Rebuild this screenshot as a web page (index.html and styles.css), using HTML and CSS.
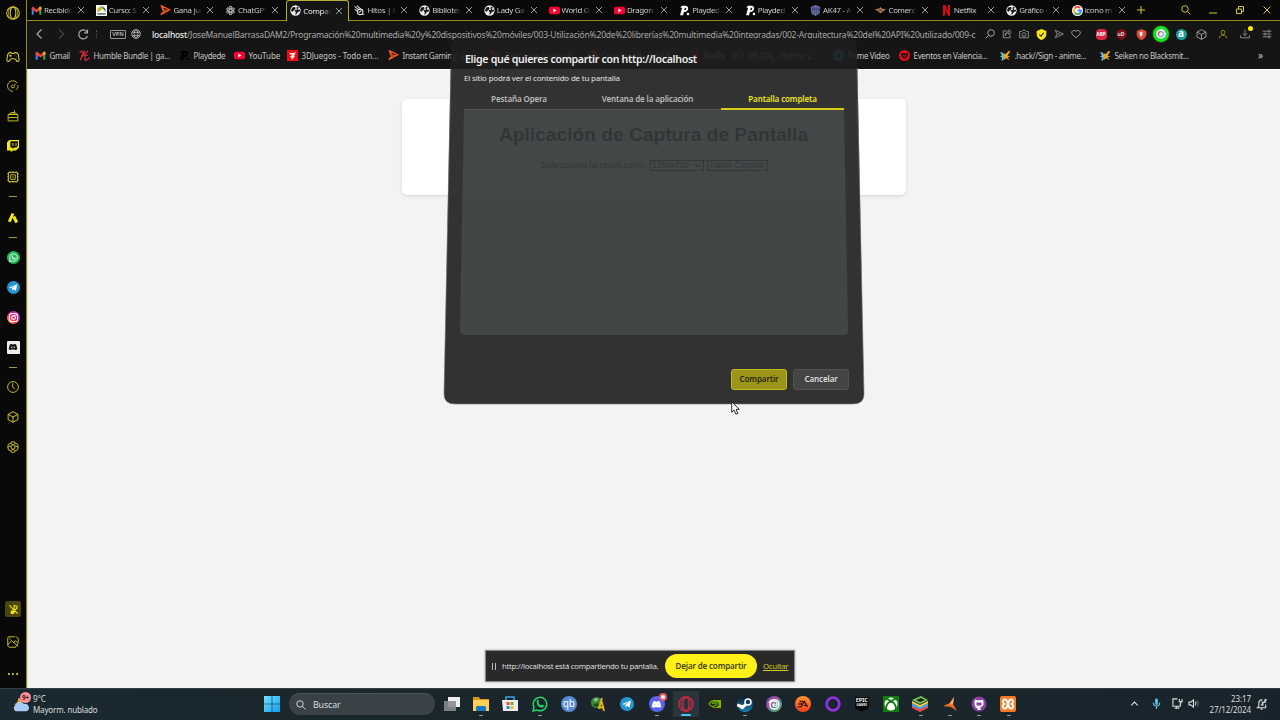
FILE: index.html
```html
<!DOCTYPE html>
<html lang="es">
<head>
<meta charset="utf-8">
<title>Compartir pantalla</title>
<link rel="stylesheet" href="styles.css">
</head>
<body>
<svg class="defs" aria-hidden="true">
  <defs>
    <linearGradient id="insta" x1="0" y1="1" x2="1" y2="0"><stop offset="0" stop-color="#ffca3a"/><stop offset=".4" stop-color="#ff3058"/><stop offset="1" stop-color="#8b25e8"/></linearGradient>
    <linearGradient id="win" x1="0" y1="0" x2="1" y2="1"><stop offset="0" stop-color="#6ce5ff"/><stop offset="1" stop-color="#149bee"/></linearGradient>
    <linearGradient id="steamg" x1="0" y1="0" x2="0" y2="1"><stop offset="0" stop-color="#10182f"/><stop offset="1" stop-color="#1783b5"/></linearGradient>
    <linearGradient id="ubig" x1="0" y1="0" x2="1" y2="1"><stop offset="0" stop-color="#3f49cc"/><stop offset=".35" stop-color="#b34b97"/><stop offset=".65" stop-color="#39958e"/><stop offset="1" stop-color="#c4a947"/></linearGradient>
    <linearGradient id="eag" x1="0" y1="0" x2="0" y2="1"><stop offset="0" stop-color="#ff962c"/><stop offset="1" stop-color="#ff3b18"/></linearGradient>
  </defs>
  <symbol id="gmail" viewBox="0 0 16 16"><path fill="#4285f4" d="M1 4v10h3V7z"/><path fill="#34a853" d="M12 7v7h3V4z"/><path fill="#ea4335" d="M1 3.5 3 2l5 4.5L13 2l2 1.5V6l-7 5-7-5z"/><path fill="#fbbc04" d="M12 3l3-1v4l-3 2z"/></symbol>
  <symbol id="globe" viewBox="0 0 16 16"><circle cx="8" cy="8" r="7.5" fill="#eee"/><path fill="#171717" d="M3 4c3-2 5-1 5 1S5 7 4.500 9s-2 0-3-1zM10 2l3 2-2 1.500 1 1.500 2.500 0v2l-3 1-2 3-2 1 1-3.500-2-2 2-1.500 2 .5-1-2z"/></symbol>
  <symbol id="close" viewBox="0 0 8 8"><path d="M1 1l6 6M7 1 1 7" fill="none" stroke="currentColor" stroke-width=".9"/></symbol>
  <symbol id="course" viewBox="0 0 16 16"><path fill="#f5f7f6" d="M0 0h16v16H0z"/><path fill="#157565" d="M7 2a7 7 0 0 1 7 8l-4-5z"/><path fill="#d8b42c" d="M2 9a6 6 0 0 1 5-7l3 3-6 5z"/><path fill="#52585b" d="M2 12h12v2H2z"/></symbol>
  <symbol id="ig" viewBox="0 0 16 16"><path fill="none" stroke="#ff581f" stroke-width="1.800" d="M2 1 6 9 1 14l13-7L2 1l2 6 9 1"/></symbol>
  <symbol id="gpt" viewBox="0 0 16 16"><g fill="none" stroke="#aaa" stroke-width="1.600"><ellipse cx="8" cy="8" rx="2.200" ry="6"/><ellipse cx="8" cy="8" rx="2.200" ry="6" transform="rotate(60 8 8)"/><ellipse cx="8" cy="8" rx="2.200" ry="6" transform="rotate(120 8 8)"/></g></symbol>
  <symbol id="hitos" viewBox="0 0 16 16"><g fill="none" stroke="#ddd" stroke-width="1.500"><path d="M1 2l6 5M1 6l5 4M4 1l6 5"/><circle cx="9" cy="10" r="4"/><path d="M7 11l4-3M12 13l3 1"/></g></symbol>
  <symbol id="yt" viewBox="0 0 16 16"><rect y="2.500" width="16" height="11" rx="3" fill="#ff0033"/><path fill="#fff" d="M6.300 5.200v5.600L11 8z"/></symbol>
  <symbol id="playd" viewBox="0 0 16 16"><path fill="currentColor" fill-rule="evenodd" d="M4 1h5c7 0 5 10-2 9l-1 5H1.500L4.500 4H2zm4.500 3-1 3.500c4 0 4-3.500 1-3.500z"/><circle cx="13" cy="13" r="1.800" fill="currentColor"/></symbol>
  <symbol id="shield" viewBox="0 0 16 16"><path fill="currentColor" d="M8 0l7 3v5c0 4-4 7-7 8-3-1-7-4-7-8V3z"/></symbol>
  <symbol id="akshield" viewBox="0 0 16 16"><path fill="#7078b2" d="M8 0l7 3-1 9-6 4-6-4-1-9z"/><path stroke="#252c52" fill="none" d="M4 3v8m3-9v12m3-12v12m3-11v8M2 6h12"/></symbol>
  <symbol id="bird" viewBox="0 0 16 16"><path fill="#a7795b" d="M0 6l6-1 2-2 2 2 6 1-4 3-4 3-4-3z"/><path fill="#5b3d2d" d="M5 7h6v1.500H5z"/></symbol>
  <symbol id="netf" viewBox="0 0 16 16"><path fill="#e50914" d="M3 0h3l4 10V0h3v16l-3-1L6 6v9l-3 1z"/></symbol>
  <symbol id="google" viewBox="0 0 16 16"><circle cx="8" cy="8" r="8" fill="#fff"/><g fill="none" stroke-width="2.600"><path stroke="#ea4335" d="M4 5a5 5 0 0 1 8-.5"/><path stroke="#fbbc05" d="M4 5a5 5 0 0 0 0 6"/><path stroke="#34a853" d="M4 11a5 5 0 0 0 8 .5"/><path stroke="#4285f4" d="M8 8h5a5 5 0 0 1-1.500 4"/></g></symbol>
  <symbol id="humble" viewBox="0 0 16 16"><path fill="none" stroke="#d72d3e" stroke-width="1.800" d="M1 4c3-4 6-2 4 3l-3 8M13 1c-4 3-5 9-4 14 2 0 4-1 6-4M4 9c4-2 6-2 9-1M8 1 7 6"/></symbol>
  <symbol id="threed" viewBox="0 0 16 16"><path fill="#f30b13" d="M0 0h16v16H0z"/><path fill="#fff" d="M4 4c4 1 7 0 9-2-1 5-3 6-6 7l5-1c-1 3-3 4-6 6l1-3-3-1 4-3-4-1z"/></symbol>
  <symbol id="heartred" viewBox="0 0 16 16"><circle cx="8" cy="8" r="8" fill="#e40b18"/><path fill="#171717" d="M8 13.500 3.500 9C1 5.500 5 3 8 5.500c3-2.500 7 0 4.500 3.500z"/><path d="M6 7.500l2 2 2.500-2.500" stroke="#e40b18" stroke-width="1.500" fill="none"/></symbol>
  <symbol id="anime" viewBox="0 0 16 16"><path fill="#efa51c" d="M5 4l3 2 5-5 2 1-4 6 4 2-4 .5 3 4.500-5-3-4 3 1-6z"/><path fill="#71c9e8" d="M0 3l4 1 2 4-1 6-3 2 1-5-3-2 3-1z"/></symbol>
  <symbol id="opera" viewBox="0 0 16 16"><g fill="none" stroke="currentColor"><circle cx="8" cy="8" r="7.200" stroke-width="1.200"/><ellipse cx="8" cy="8" rx="3.200" ry="6.700" stroke-width="1.200"/><path d="M5 2C2 5 2 11 5 14M11 2c3 3 3 9 0 12" stroke-width=".8"/></g></symbol>
  <symbol id="pad" viewBox="0 0 16 16"><path fill="none" stroke="currentColor" stroke-width="1.200" d="M4 3h2l1 1h2l1-1h2l2 2 1 6c0 3-2 3-4 0l-1-1H6l-1 1c-2 3-4 3-4 0l1-6zM5 5v3M3.500 6.500h3M10 6h.5m1 2h.5"/></symbol>
  <symbol id="search" viewBox="0 0 16 16"><path fill="none" stroke="currentColor" stroke-width="1.500" d="M10 10l5 5M11.500 6.300A5.200 5.200 0 1 1 1.100 6.300a5.200 5.200 0 0 1 10.400 0z"/></symbol>
  <symbol id="cube" viewBox="0 0 16 16"><path fill="none" stroke="currentColor" stroke-width="1.300" d="M8 1l6.500 3.500v7L8 15l-6.500-3.500v-7zM1.500 4.500 8 8l6.500-3.500M8 8v7"/></symbol>
  <symbol id="heart" viewBox="0 0 16 16"><path fill="none" stroke="currentColor" stroke-width="1.500" d="M8 14 2 8.500C-1 4 5 0 8 4c3-4 9 0 6 4.500z"/></symbol>
  <symbol id="wa" viewBox="0 0 16 16"><path fill="none" stroke="currentColor" stroke-width="1.500" d="M1 15l1-4a6.700 6.700 0 1 1 3 3z"/><path fill="currentColor" d="M5 4l1-.2 1 2-.7 1c.7 1.300 1.300 2 2.700 2.600l1-1 2 1c0 2-2 2.500-3.500 2C6 10.500 4 8 5 4z"/></symbol>
  <symbol id="tg" viewBox="0 0 16 16"><circle cx="8" cy="8" r="8" fill="#2597d0"/><path fill="#fff" d="M2.500 8 12.500 4 11 12l-3-2-1.500 2-.5-2.500 4-4-5.300 3.300z"/></symbol>
  <symbol id="discord" viewBox="0 0 16 16"><path fill="currentColor" d="M3 4c2-1 3-1 3-1l1 1h2l1-1s2 0 3 1l2 7-3 2-1-1H5l-1 1-3-2z"/><circle class="eye" cx="6" cy="8.500" r="1.200"/><circle class="eye" cx="10" cy="8.500" r="1.200"/></symbol>
</svg>

<div class="screen">
  <aside class="sidebar">
    <svg class="i14 top"><use href="#opera"/></svg>
    <svg class="i14"><use href="#pad"/></svg>
    <svg class="i12" viewBox="0 0 16 16"><path d="M13.500 4A7 7 0 1 0 8 15M12 13l2.500-2.500V7M9 8l2.500-3M8 6.500a2 2 0 1 0 2 2" class="line"/></svg>
    <svg class="i12" viewBox="0 0 16 16"><path d="M1.500 6h13v8.500h-13zM2 10h12M3 6l1-2h8l1 2M6 3.500h4V.5" class="line"/></svg>
    <svg class="i12 bright" viewBox="0 0 16 16"><path fill="currentColor" fill-rule="evenodd" d="M3 0h13v10l-4 4H8l-3 2v-2H0V3zm1.500 1.500V10h3v2l2-2h3l2-2V1.500z"/><path class="line" d="M8 4v4M12 4v4"/></svg>
    <svg class="i12" viewBox="0 0 16 16"><path d="M2 2h12v12H2zM5 5h6v6H5zM4 0v2m4-2v2m4-2v2M4 14v2m4-2v2m4-2v2M0 4h2m-2 4h2m-2 4h2M14 4h2m-2 4h2m-2 4h2M7 8h2" class="line"/></svg>
    <i class="dash"></i>
    <svg class="i12 bright" viewBox="0 0 16 16"><path d="M8 2 3 13M9 6l4 8" fill="none" stroke="currentColor" stroke-width="4"/></svg>
    <i class="dash"></i>
    <span class="round wa"><svg><use href="#wa"/></svg></span>
    <svg class="i13"><use href="#tg"/></svg>
    <svg class="i13" viewBox="0 0 16 16"><circle cx="8" cy="8" r="8" fill="url(#insta)"/><rect x="3" y="3" width="10" height="10" rx="3" fill="none" stroke="#fff" stroke-width="1.300"/><circle cx="8" cy="8" r="2.300" fill="none" stroke="#fff" stroke-width="1.300"/><circle cx="11" cy="5" r=".8" fill="#fff"/></svg>
    <span class="disc-side"><svg><use href="#discord"/></svg></span>
    <i class="dash"></i>
    <svg class="i12" viewBox="0 0 16 16"><circle cx="8" cy="8" r="7.200" class="line"/><path class="line" d="M7.500 3v5l3 3"/></svg>
    <svg class="i12"><use href="#cube"/></svg>
    <svg class="i12" viewBox="0 0 16 16"><path class="line" d="M6 1h4l1 2 3 1 1 4-1 4-3 1-1 2H6l-1-2-3-1-1-4 1-4 3-1zM8 5l2.500 1.500v3L8 11 5.500 9.500v-3zM5 3l3 2 3-2M1 8l4.500-1.500M15 8l-4.500-1.500M5 13l3-2 3 2"/></svg>
    <span></span>
    <span class="music"><svg class="i12 bright" viewBox="0 0 16 16"><path fill="none" stroke="currentColor" stroke-width="1.600" d="M2 2l12 12M9 12V2l4 1v2M14 5l-6 6"/><circle cx="6.500" cy="12" r="2.800" fill="currentColor"/></svg></span>
    <svg class="i12" viewBox="0 0 16 16"><path class="line" d="M11 1H2L1 3v10l2 2h9M12 1l3 2v6M1 12l5-6 9 8M9 9l2-3 4 4M3 4h2M12 14l3-4"/></svg>
    <svg class="i12 bright" viewBox="0 0 16 16"><g fill="currentColor"><circle cx="2.500" cy="8" r="1.300"/><circle cx="8" cy="8" r="1.300"/><circle cx="13.500" cy="8" r="1.300"/></g></svg>
  </aside>

  <header class="browser">
    <div class="tabs">
      <div class="tab"><svg><use href="#gmail"/></svg><span>Recibidos</span><svg class="x"><use href="#close"/></svg></div>
      <div class="tab"><svg><use href="#course"/></svg><span>Curso: S</span><svg class="x"><use href="#close"/></svg></div>
      <div class="tab"><svg><use href="#ig"/></svg><span>Gana jue</span><svg class="x"><use href="#close"/></svg></div>
      <div class="tab"><svg><use href="#gpt"/></svg><span>ChatGPT</span><svg class="x"><use href="#close"/></svg></div>
      <div class="tab active"><svg><use href="#globe"/></svg><span>Compar</span><svg class="x"><use href="#close"/></svg></div>
      <div class="tab"><svg><use href="#hitos"/></svg><span>Hitos | Bl</span><svg class="x"><use href="#close"/></svg></div>
      <div class="tab"><svg><use href="#globe"/></svg><span>Bibliotec</span><svg class="x"><use href="#close"/></svg></div>
      <div class="tab"><svg><use href="#globe"/></svg><span>Lady Ga</span><svg class="x"><use href="#close"/></svg></div>
      <div class="tab wide"><svg><use href="#yt"/></svg><span>World O</span><svg class="x"><use href="#close"/></svg></div>
      <div class="tab wide"><svg><use href="#yt"/></svg><span>Dragon B</span><svg class="x"><use href="#close"/></svg></div>
      <div class="tab wide white"><svg><use href="#playd"/></svg><span>Playded</span><svg class="x"><use href="#close"/></svg></div>
      <div class="tab wide white"><svg><use href="#playd"/></svg><span>Playded</span><svg class="x"><use href="#close"/></svg></div>
      <div class="tab wide"><svg><use href="#akshield"/></svg><span>AK47 - A</span><svg class="x"><use href="#close"/></svg></div>
      <div class="tab wide"><svg><use href="#bird"/></svg><span>Comerci</span><svg class="x"><use href="#close"/></svg></div>
      <div class="tab wide full"><svg><use href="#netf"/></svg><span>Netflix</span><svg class="x"><use href="#close"/></svg></div>
      <div class="tab wide"><svg><use href="#globe"/></svg><span>Gráfico G</span><svg class="x"><use href="#close"/></svg></div>
      <div class="tab wide"><svg><use href="#google"/></svg><span>icono m</span><svg class="x"><use href="#close"/></svg></div>
      <div class="winbtns">
        <svg class="plus" viewBox="0 0 8 8"><path class="line" d="M4 0v8M0 4h8"/></svg>
        <svg class="mag"><use href="#search"/></svg>
        <svg viewBox="0 0 8 8"><path class="line" d="M0 7h8"/></svg>
        <svg viewBox="0 0 8 8"><path class="line" d="M.5 3h5v4.500h-5zM2.500 3V.5h5v5h-2"/></svg>
        <svg viewBox="0 0 8 8"><path class="line" d="M.5.500l7 7m0-7-7 7"/></svg>
      </div>
    </div>

    <div class="address">
      <div class="nav">
        <svg viewBox="0 0 12 12"><path class="line" d="M8.500 1.500 4 6l4.500 4.500"/></svg>
        <svg class="off" viewBox="0 0 12 12"><path class="line" d="M4 1.500 8.500 6 4 10.500"/></svg>
        <svg viewBox="0 0 12 12"><path class="line" d="M10.500 1.500v3.300H7.200M10.500 4.800A4.500 4.500 0 1 0 10.500 8"/></svg>
        <i class="sep"></i>
      </div>
      <b class="vpn">VPN</b>
      <svg class="web" viewBox="0 0 12 12"><g class="line"><circle cx="6" cy="6" r="5.200"/><ellipse cx="6" cy="6" rx="2.300" ry="5.200"/><path d="M1.500 4h9M1.500 8h9"/></g></svg>
      <div class="url"><b>localhost</b>/JoseManuelBarrasaDAM2/Programación%20multimedia%20y%20dispositivos%20móviles/003-Utilización%20de%20librerías%20multimedia%20integradas/002-Arquitectura%20del%20API%20utilizado/009-c</div>
      <div class="actions">
        <svg class="flip"><use href="#search"/></svg>
        <svg viewBox="0 0 16 16"><path class="line" d="M8 3H2v11h11V9M5 11c0-5 3-7 6-7V1l4 4-4 4V6c-3 0-5 2-6 5z"/></svg>
        <svg viewBox="0 0 16 16"><path class="line" d="M1 4h3l2-2h4l2 2h3v10H1z"/><circle class="line" cx="8" cy="9" r="3"/></svg>
        <span class="badge-y"><svg><use href="#shield"/></svg><svg class="tick" viewBox="0 0 8 8"><path d="M1.500 4 3.500 6l3-4" class="line"/></svg></span>
        <svg viewBox="0 0 16 16"><path class="line" d="M2 2l13 6-13 6 3-6zM5 8h5"/></svg>
        <svg><use href="#heart"/></svg>
      </div>
      <div class="exts">
        <b class="abp">ABP</b>
        <span class="ublock"><svg><use href="#shield"/></svg><b>uD</b></span>
        <span class="adg"><svg><use href="#shield"/></svg><svg class="hand" viewBox="0 0 8 8"><path fill="#fff" d="M2 3V2h1V1h1v1h1V1h1v4L5 7H3z"/></svg></span>
        <span class="ring"><svg viewBox="0 0 16 16"><circle cx="8" cy="8" r="8" fill="#f3eef0"/><circle cx="8" cy="8" r="4" fill="none" stroke="#7fa9d8" stroke-width="2"/><path d="M4 9a4 4 0 0 1 3-5" fill="none" stroke="#e64a3d" stroke-width="2"/></svg></span>
        <b class="alexa">a</b>
        <svg><use href="#cube"/></svg>
      </div>
      <div class="user">
        <svg class="yl" viewBox="0 0 16 16"><path class="line" d="M2 15c0-7 12-7 12 0M11 5.500a3 3.500 0 1 1-6 0 3 3.500 0 0 1 6 0z"/></svg>
        <span class="dl"><svg viewBox="0 0 16 16"><path class="line" d="M1 10v4h14v-4M8 1v9M4.500 7 8 10.500 11.500 7"/></svg></span>
        <svg viewBox="0 0 16 16"><path class="line" d="M1 3.500h14M1 8h14M1 12.500h14M11 1v5M5 5.500v5M11 10v5"/></svg>
      </div>
    </div>

    <div class="bookmarks">
      <a><svg><use href="#gmail"/></svg>Gmail</a>
      <a><svg><use href="#humble"/></svg>Humble Bundle | ga...</a>
      <a><svg class="blk"><use href="#playd"/></svg>Playdede</a>
      <a><svg><use href="#yt"/></svg>YouTube</a>
      <a><svg><use href="#threed"/></svg>3DJuegos - Todo en...</a>
      <a><svg><use href="#ig"/></svg>Instant Gaming: a...</a>
      <a><svg><use href="#ig"/></svg>Descargar Juegos R...</a>
      <a><svg viewBox="0 0 16 16"><circle cx="8" cy="8" r="6.500" fill="none" stroke="#f47521" stroke-width="2.500"/><circle cx="10" cy="7" r="3" fill="#f47521"/></svg>Crunchyroll - default</a>
      <a><svg><use href="#netf"/></svg>Netflix</a>
      <a><svg><use href="#pad"/></svg>VRUTAL - Humor y...</a>
      <a><svg viewBox="0 0 16 16"><circle cx="8" cy="8" r="8" fill="#12a5b5"/><path fill="#111" d="M6 4v8l6-4z"/></svg>Prime Video</a>
      <a><svg><use href="#heartred"/></svg>Eventos en Valencia...</a>
      <a><svg><use href="#anime"/></svg>.hack//Sign - anime...</a>
      <a><svg><use href="#anime"/></svg>Seiken no Blacksmit...</a>
      <span class="more">»</span>
    </div>
  </header>

  <main class="page">
    <section class="card">
      <h1>Aplicación de Captura de Pantalla</h1>
      <div class="controls"><span class="lab">Selecciona la resolución:</span><span class="sel">1280x720<svg viewBox="0 0 8 8"><path class="line" d="M1 2.500l3 3 3-3"/></svg></span><span class="cap">Hacer Captura</span></div>
    </section>
  </main>

  <footer class="taskbar">
    <div class="weather">
      <span class="wx"><svg viewBox="0 0 20 20"><path fill="#eda12c" d="M2 10c3 0 5-3 5-7 5 2 5 8 1 10z"/><path fill="#a8cdf5" d="M4 18a4 4 0 0 1 0-7 5 5 0 0 1 9-1 4.200 4.200 0 1 1 3 8z"/></svg><b>9+</b></span>
      <span>9°C<br>Mayorm. nublado</span>
    </div>
    <div class="apps">
      <svg class="start" viewBox="0 0 16 16"><path fill="url(#win)" d="M0 0h7.700v7.700H0zM8.300 0H16v7.700H8.300zM0 8.300h7.700V16H0zM8.300 8.300H16V16H8.300z"/></svg>
      <div class="find"><svg><use href="#search"/></svg>Buscar</div>
      <span class="app"><svg viewBox="0 0 16 16"><path fill="#eee" d="M4 1h12v10H4z"/><path fill="#888b8c" fill-opacity=".9" d="M0 5h12v10H0z"/></svg></span>
      <span class="app on"><svg viewBox="0 0 16 16"><path fill="#d99a19" d="M0 1h6l1 2h9v4H0z"/><path fill="#ffd052" d="M0 4h16v11H0z"/><path fill="#167ac8" d="M3 15v-4l1-1h8l1 1v4z"/></svg></span>
      <span class="app"><svg viewBox="0 0 16 16"><path fill="none" stroke="#31a9e0" stroke-width="1.500" d="M4 5V1h8v4"/><path fill="#eee" d="M0 4h16v11H1z"/><path fill="#e45233" d="M4.500 6h3v3h-3z"/><path fill="#6caf38" d="M8.500 6h3v3h-3z"/><path fill="#248ddd" d="M4.500 10h3v3h-3z"/><path fill="#eebc25" d="M8.500 10h3v3h-3z"/></svg></span>
      <span class="app on wag"><svg><use href="#wa"/></svg></span>
      <span class="app"><b class="qb">qb</b></span>
      <span class="app"><svg viewBox="0 0 16 16"><circle cx="6.500" cy="6.500" r="5.500" fill="#3d8a2b"/><path fill="#8fc0d0" d="M4 3l3-1 1 2-3 2z"/><path fill="#1b4e1c" d="M3 8l5-1 1 3-4 1z"/><path d="M9 12l3-10M11 3l3 12M8 12l6-1" stroke="#ebb116" stroke-width="1.800" fill="none"/></svg></span>
      <span class="app"><svg class="i14"><use href="#tg"/></svg></span>
      <span class="app on"><span class="disc"><svg><use href="#discord"/></svg><i></i></span></span>
      <span class="app current"><svg><use href="#opera"/></svg></span>
      <span class="app"><svg viewBox="0 0 16 16"><path fill="#202322" d="M0 0h16v16H0z"/><path fill="#77b900" d="M6 4h8v8H6v-1c3 1 5 0 6-3-2-3-4-3-6-3z"/><path d="M2 8c3-5 6-3 8 0-3 4-6 3-8 0zM5 8c1-2 2-1 3 0" stroke="#77b900" stroke-width="1.200" fill="none"/></svg></span>
      <span class="app on"><svg viewBox="0 0 16 16"><circle cx="8" cy="8" r="8" fill="url(#steamg)"/><path d="M0 9l6 2 4-4" stroke="#fff" stroke-width="3" fill="none"/><circle cx="11" cy="6" r="3" fill="#173b63" stroke="#fff" stroke-width="1.500"/><circle cx="5" cy="11" r="2" fill="#fff"/></svg></span>
      <span class="app"><svg viewBox="0 0 16 16"><circle cx="8" cy="8" r="8" fill="url(#ubig)"/><path d="M3 7c2-5 10-4 10 1 0 6-9 7-9 1 0-5 7-5 7-1 0 3-4 3-4 1 0-2 2-1 2 0" stroke="#fff" stroke-width="1.400" fill="none"/></svg></span>
      <span class="app"><svg viewBox="0 0 16 16"><circle cx="8" cy="8" r="8" fill="url(#eag)"/><path d="M4.500 5.500h4M3.500 8h4M2.500 10.800H6L9.500 5.500l3.200 5.300M9 9.500h3" stroke="#381611" stroke-width="1.300" fill="none"/></svg></span>
      <span class="app"><svg viewBox="0 0 16 16"><circle cx="8" cy="8" r="6.300" fill="none" stroke="#9032e4" stroke-width="2.800"/></svg></span>
      <span class="app"><b class="epic">EPIC<small>GAMES</small></b></span>
      <span class="app"><svg viewBox="0 0 16 16"><path fill="#107c10" d="M0 0h16v16H0z"/><circle cx="8" cy="8" r="6.500" fill="#fff"/><path d="M3 13c0-5 3-7 5-8 2 1 5 3 5 8M3 3c2 0 3 1 5 2 2-1 3-2 5-2" fill="none" stroke="#107c10" stroke-width="1.800"/></svg></span>
      <span class="app on"><svg viewBox="0 0 16 16"><path fill="#e8494b" d="M0 9l8 3 8-3v3l-8 4-8-4z"/><path fill="#3f9de8" d="M0 7l8 3 8-3v3l-8 3-8-3z"/><path fill="#f6d83d" d="M0 5l8 4 8-4v2l-8 4-8-4z"/><path fill="#75ca4d" d="M0 4l9-4 7 4-8 4z"/><path fill="#171d20" d="M4 4l5-2 4 2-5 2z"/></svg></span>
      <span class="app on"><svg viewBox="0 0 16 16"><path fill="#f36b20" d="M12 1l-1 7 4 7-6-4-8-1 7-3z"/><path fill="#ffad59" d="M12 1l-1 7-3 1V7z"/></svg></span>
      <span class="app on"><svg viewBox="0 0 16 16"><circle cx="8" cy="8" r="7.500" fill="#87419f"/><path fill="#fff" d="M4 3.500l2 .8h4l2-.8.5 3c.5 3-1 4-3 4.500v3h-3v-2H5l-1-1.500h2.500V11c-2-.5-3.500-1.500-3-4.500zM5.500 6.500v3h5v-3z" fill-rule="evenodd"/></svg></span>
      <span class="app on"><svg viewBox="0 0 16 16"><rect width="16" height="16" rx="2" fill="#fb7a24"/><path d="M5.500 8C2 8 2 3.500 5 3.500S7 8 8 8s0-4.500 3-4.500S14 8 10.500 8c3.500 0 3.500 4.500.500 4.500S9 8 8 8s0 4.500-3 4.500S2 8 5.500 8z" stroke="#fff" stroke-width="1.800" fill="none"/></svg></span>
    </div>
    <div class="tray">
      <svg viewBox="0 0 12 12"><path class="line" d="M2.500 8 6 4.500 9.500 8"/></svg>
      <svg class="mic" viewBox="0 0 12 12"><path class="line" d="M6 1v6M2.500 5c0 5 7 5 7 0M6 9v3"/><rect x="4.500" y=".5" width="3" height="7" rx="1.500" fill="#68bde5"/></svg>
      <svg viewBox="0 0 12 12"><path class="line" d="M6 1H1v8h8V6M3 11h5M5 9v2M8 1v3h3V1M9.500 4v3"/></svg>
      <svg viewBox="0 0 12 12"><path class="line" d="M1 4.500h2L6 2v8L3 7.500H1zM8 4q1.500 2 0 4"/><path class="line dim" d="M10 2.500q2 3.500 0 7"/></svg>
    </div>
    <div class="clock">23:17<br>27/12/2024</div>
    <svg class="bell" viewBox="0 0 12 12"><path class="line" d="M7 1C4 1 3 3 3 5v3L1.500 9.500h9V6M5 11h2M6 3.500h2.500L6 6.500h2.500M9 1h2L9 3.500h2"/></svg>
  </footer>
</div>

<div class="dialog">
  <svg class="shape" viewBox="0 0 424 370">
    <path fill="#1e1e1e" fill-opacity=".905" d="M17 1H406Q415 1 415 11L422 357Q422 367 411 367H13Q2 367 2 357L9 11Q9 1 17 1Z"/>
    <path fill="#d8fcff" fill-opacity=".1" d="M22 72H402L406 293Q406 298 401 298H23Q18 298 18 293Z"/>
    <path fill="none" stroke="#777" stroke-opacity=".6" d="M415 31 422 357Q422 367 411 367H13Q2 367 2 357L9 31"/>
  </svg>
  <div class="dcontent">
    <h2>Elige qué quieres compartir con http://localhost</h2>
    <p>El sitio podrá ver el contenido de tu pantalla</p>
    <div class="dtabs"><b>Pestaña Opera</b><b>Ventana de la aplicación</b><b class="sel-tab">Pantalla completa</b></div>
    <div class="dbtns"><b class="go">Compartir</b><b>Cancelar</b></div>
  </div>
</div>

<div class="sharebar"><i class="pause"></i><span class="msg">http://localhost está compartiendo tu pantalla.</span><b>Dejar de compartir</b><u>Ocultar</u></div>
<svg class="cursor" viewBox="0 0 9 14"><path d="M.7.800v10.500l2.400-2.200 1.800 4 1.900-.8-1.700-3.900h3.200z" fill="#fff" stroke="#111" stroke-width=".9"/></svg>
</body>
</html>
```
FILE: styles.css
```css
* { box-sizing: border-box; }
html, body { margin: 0; height: 100%; overflow: hidden; }
body { font-family: "Noto Sans", "Open Sans", sans-serif; font-size: 8px; color: #ccc; background: #f3f3f3; }
svg { display: block; flex: none; }
.defs { position: absolute; width: 0; height: 0; }
.line { fill: none; stroke: currentColor; stroke-width: 1.2; }
.screen { width: 1280px; height: 720px; display: grid; grid-template-columns: 27px 1253px; grid-template-rows: 69px 619px 32px; }

.sidebar { grid-row: 1 / 3; background: #090909; border-right: 1px solid #938c2b; color: #d3c82c; display: grid; justify-items: center; align-items: center;
  grid-template-rows: 42px 30px 28px 31px 30px 32px 7px 36px 2px 39px 20px 40px 20px 20px 20px 40px 20px 1fr 30px 36px 28px; }
.sidebar .top { margin-bottom: 16px; }
.i12 { width: 12px; height: 12px; }
.i13 { width: 13px; height: 13px; }
.i14 { width: 14px; height: 14px; }
.sidebar .bright { color: #f4e718; }
.dash { width: 8px; height: 1px; background: #a69b38; }
.round { width: 13px; height: 13px; border-radius: 50%; display: grid; place-items: center; }
.round svg { width: 9px; height: 9px; }
.wa { background: #20b858; color: #fff; }
.disc-side { width: 13px; height: 13px; background: #eee; color: #111; border-radius: 1px; display: grid; place-items: center; }
.disc-side svg { width: 10px; height: 10px; }
.eye { fill: #ddd; }
.music { width: 16px; height: 16px; border-radius: 2px; background: #4b460b; display: grid; place-items: center; }
.music .i12 { width: 11px; height: 11px; }

.browser { background: #151515; display: grid; grid-template-rows: 21px 26px 22px; }
.tabs { background: #090909; display: flex; border-bottom: 1px solid #938c2b; }
.tab { width: 64.700px; height: 20px; padding: 0 6px 0 4px; display: flex; align-items: center; flex: none; }
.tab > svg { width: 11px; height: 11px; }
.tab span { width: 29px; margin-left: 2px; overflow: hidden; white-space: nowrap; font-size: 7.900px; letter-spacing: -.3px; -webkit-mask-image: linear-gradient(90deg, #000 70%, transparent); mask-image: linear-gradient(90deg, #000 70%, transparent); }
.tab.wide { width: 65.400px; }
.tab.full span { -webkit-mask-image: none; mask-image: none; }
.tab .x { width: 8px; height: 8px; margin-left: 4px; color: #aaa; }
.tab.active { height: 21px; width: 63px; margin-left: .600px; margin-right: 1.100px; padding: 0 5px 1px 3px; background: #151515; border: 1px solid #b8ad30; border-bottom: 0; border-radius: 3px 3px 0 0; color: #eee; }
.white > svg:first-child { color: #fff; }
.winbtns { flex: 1; display: grid; grid-template-columns: 40px repeat(4, 26.800px); align-items: center; justify-items: center; color: #d4c92d; }
.winbtns svg { width: 8px; height: 8px; }
.winbtns .line { stroke-width: 1; }
.winbtns .plus { justify-self: start; margin-left: 4px; }
.winbtns .mag { width: 10px; height: 10px; }

.address { display: flex; align-items: center; color: #aaa; }
.nav { width: 83px; display: flex; align-items: center; padding-left: 6px; gap: 10px; }
.nav svg { width: 12px; height: 12px; }
.sep { width: 1px; height: 8px; margin-left: -3px; border-left: 1px dotted #555; }
.off { color: #444; }
.vpn { width: 16px; height: 9px; border: 1px solid #999; border-radius: 1px; font-size: 5.500px; line-height: 7px; text-align: center; }
.web { width: 10px; height: 10px; margin-left: 5px; }
.url { width: 825px; margin-left: 11px; overflow: hidden; white-space: nowrap; font-size: 8.500px; letter-spacing: -.188px; }
.url b { color: #eee; font-weight: 500; }
.actions, .exts, .user { display: grid; align-items: center; justify-items: center; height: 20px; }
.actions { width: 104px; margin-left: 4px; grid-template-columns: repeat(6, 17.350px); }
.actions > svg { width: 10px; height: 10px; }
.flip { transform: scaleX(-1); }
.badge-y, .ublock, .adg { position: relative; width: 11px; height: 11px; color: #f7e714; }
.badge-y > svg, .ublock > svg, .adg > svg { width: 11px; height: 11px; }
.badge-y .tick { position: absolute; width: 7px; height: 7px; left: 2px; top: 2px; color: #111; }
.exts { width: 120px; margin-left: 6px; grid-template-columns: repeat(6, 20px); }
.exts > svg { width: 11px; height: 11px; }
.abp { width: 11px; height: 11px; border-radius: 4px; background: #dc2544; color: #fff; font-size: 4.500px; line-height: 11px; text-align: center; }
.ublock { color: #831017; }
.ublock b { position: absolute; inset: 2px 0 0; font-size: 5px; line-height: 6px; text-align: center; color: #ddd; }
.adg { color: #df4939; }
.adg .hand { position: absolute; width: 6px; height: 6px; left: 2.500px; top: 2px; }
.ring { width: 16px; height: 16px; border-radius: 50%; border: 3px solid #05ed1c; box-shadow: 0 0 2px #b50; }
.ring svg { width: 10px; height: 10px; }
.alexa { width: 11px; height: 11px; border-radius: 50%; background: #159f9a; color: #fff; font-size: 10px; line-height: 9px; text-align: center; }
.user { width: 66px; margin-left: 1px; grid-template-columns: repeat(3, 22px); }
.user svg { width: 10px; height: 10px; }
.user .yl { color: #b9ac20; }
.dl { position: relative; }
.dl::after { content: ""; position: absolute; width: 5px; height: 5px; border-radius: 50%; background: #ffed00; left: 8px; top: -3px; }

.bookmarks { display: grid; align-items: center; padding-left: 8px; height: 17px; color: #c5c5c5;
  grid-template-columns: 44px 100px 55px 53px 101px 102px 97px 102px 44px 100px 66px 101px 100px 158px 20px; }
.bookmarks a { display: flex; align-items: center; gap: 3.500px; white-space: nowrap; font-size: 8px; letter-spacing: -.32px; }
.bookmarks a:nth-child(n+4):nth-child(-n+5) { letter-spacing: -.1px; }
.bookmarks svg { width: 11px; height: 11px; }
.blk { color: #000; }
.more { font-size: 10px; line-height: 14px; margin-top: -2px; }

.page { background: #f3f3f3; border-top: 1px solid #fff; border-left: 1px solid #dedec8; font-family: "Liberation Sans", Arial, sans-serif; }
.card { width: 504px; height: 96px; margin: 29px 0 0 374px; background: #fff; border-radius: 5px; box-shadow: 0 1px 3px #0002; color: #333; text-align: center; padding-top: 24px; }
.card h1 { margin: 0; padding-right: 1px; font-size: 19.200px; line-height: 23px; }
.controls { display: flex; justify-content: center; align-items: center; gap: 4px; margin-top: 13px; font-size: 9.500px; line-height: 12px; }
.sel, .cap { border: 1px solid #444; height: 11px; line-height: 9px; font-size: 8.200px; padding: 0 2px; }
.sel { width: 54px; display: flex; justify-content: space-between; align-items: center; }
.sel svg { width: 7px; height: 7px; }
.cap { width: 61px; margin-left: -1px; white-space: nowrap; }

.taskbar { grid-column: 1 / 3; position: relative; background: linear-gradient(90deg, #18292f, #1b252b 50%, #18242c); border-top: 1px solid #333d42; display: flex; align-items: flex-start; color: #ddd; }
.weather { width: 264px; padding: 5px 0 0 12px; display: flex; gap: 3px; font-size: 8px; letter-spacing: -.15px; line-height: 10.500px; white-space: nowrap; }
.wx { position: relative; width: 18px; }
.wx svg { width: 18px; height: 18px; margin-top: 1px; }
.wx b { position: absolute; left: 8px; top: -2px; width: 11px; height: 11px; border-radius: 50%; background: #ff8f9a; color: #42191c; font-size: 6.500px; line-height: 11px; text-align: center; }
.apps { display: flex; align-items: center; height: 30px; }
.start { width: 16px; height: 16px; }
.find { width: 146px; height: 22px; margin: 0 2px 0 9px; padding-left: 7px; border-radius: 11px; background: #3a4247; border-top: 1px solid #4d5558; display: flex; align-items: center; gap: 7px; font-size: 8.800px; letter-spacing: -.1px; }
.find svg { width: 10px; height: 10px; }
.app { width: 29.300px; height: 30px; display: grid; place-items: center; position: relative; }
.app > svg { width: 16px; height: 16px; }
.app > .i14 { width: 14px; height: 14px; }
.on::after, .current::after { content: ""; position: absolute; bottom: 3px; left: 13px; width: 4px; height: 1.500px; border-radius: 1px; background: #9ba2a4; }
.current { color: #dc2849; background: linear-gradient(#29353b, #29353b) center / 26px 26px no-repeat; }
.current::after { width: 10px; left: 10px; height: 2px; background: #4cc2ff; }
.wag { color: #25d366; }
.qb { width: 16px; height: 16px; border-radius: 50%; background: #588bd0; color: #fff; font-size: 10px; font-weight: 400; line-height: 14px; text-align: center; }
.disc { position: relative; width: 16px; height: 16px; border-radius: 50%; background: #5865f2; color: #fff; display: grid; place-items: center; }
.disc svg { width: 11px; height: 11px; }
.disc .eye { fill: #5865f2; }
.disc i { position: absolute; width: 8px; height: 8px; right: -2px; top: -3px; border-radius: 50%; background: #fff; border: 2.500px solid #e65a62; }
.epic { width: 14px; height: 15px; background: #080808; color: #eee; font-size: 5.500px; line-height: 7px; text-align: center; clip-path: polygon(0 0, 100% 0, 100% 80%, 50% 100%, 0 80%); }
.epic small { display: block; font-size: 3px; line-height: 3px; }
.tray { position: absolute; left: 1124px; top: 9px; display: grid; grid-template-columns: 21px 22px 21px 11px; align-items: center; justify-items: center; color: #ddd; }
.tray svg { width: 11px; height: 11px; }
.tray .mic { color: #68bde5; }
.dim { opacity: .35; }
.clock { margin: 5px 29px 0 auto; width: 60px; font-size: 8px; letter-spacing: -.1px; line-height: 10.500px; text-align: right; }
.bell { position: absolute; width: 11px; height: 11px; right: 13px; top: 10px; }

.dialog { position: absolute; left: 442px; top: 37px; width: 424px; height: 370px; font-family: "Noto Sans", sans-serif; }
.shape { position: absolute; inset: 0; width: 424px; height: 370px; }
.dcontent { position: relative; padding: 14px 17px 0 22px; }
.dialog h2 { margin: 0 0 0 1px; font-size: 10.600px; line-height: 16px; font-weight: 600; color: #eee; white-space: nowrap; letter-spacing: -.31px; }
.dialog p { margin: 5px 0 0; font-size: 7.900px; line-height: 12px; letter-spacing: -.15px; color: #e3e3e3; }
.dtabs { display: grid; grid-template-columns: 110px 147px 123px; width: 380px; margin-top: 5px; text-align: center; font-size: 8px; letter-spacing: -.12px; line-height: 19px; color: #bbb; }
.dtabs b { height: 21px; border-bottom: 1px solid #555; font-weight: 600; }
.dtabs .sel-tab { border-bottom: 2px solid #d7cc14; color: #f0e51d; }
.dbtns { display: flex; justify-content: flex-end; gap: 6px; margin-top: 259px; }
.dbtns b { width: 56px; height: 21px; border: 1px solid #525252; border-radius: 3px; background: #444; color: #ddd; font-size: 8px; letter-spacing: -.1px; line-height: 18px; font-weight: 600; text-align: center; }
.dbtns .go { background: #9b9619; border: 1px solid #c2b923; color: #292809; }

.sharebar { position: absolute; left: 485px; top: 650px; width: 310px; height: 32px; background: #292929; border: 1px solid #888; box-shadow: 0 0 2px #0005; display: flex; align-items: center; color: #ddd; font-size: 7.800px; letter-spacing: -.15px; white-space: nowrap; }
.pause { width: 4px; height: 7px; margin-left: 6px; border: solid #bbb; border-width: 0 1px; }
.msg { width: 157px; margin-left: 6px; letter-spacing: -.3px; }
.sharebar b { width: 92px; height: 24px; border-radius: 12px; margin-left: 6px; background: #fff017; color: #44430e; font-size: 8px; line-height: 24px; text-align: center; font-weight: 600; }
.sharebar u { margin-left: 6px; color: #d5ca22; letter-spacing: -.25px; }
.cursor { position: absolute; left: 731px; top: 401px; width: 9px; height: 14px; }
```
